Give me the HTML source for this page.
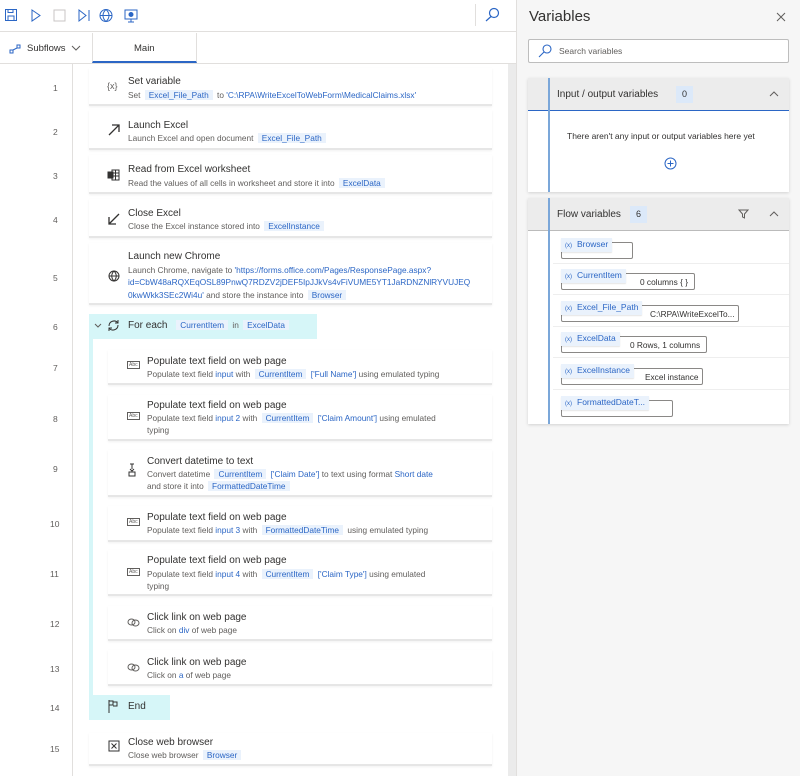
<!DOCTYPE html>
<html><head><meta charset="utf-8"><style>
*{box-sizing:border-box;margin:0;padding:0}
body{width:800px;height:776px;overflow:hidden;background:#fff;font-family:"Liberation Sans",sans-serif;position:relative;color:#323130}
.a{position:absolute}
.num{position:absolute;left:40px;width:30px;text-align:left;font-size:8.5px;color:#605e5c}
.card{position:absolute;left:89px;width:403px;background:#fff;border-bottom:2px solid #e6e6e6;box-shadow:0 1px 2px rgba(0,0,0,.06)}
.in{left:108px;width:384px}
.t{position:absolute;font-size:10px;color:#323130;white-space:nowrap}
.s{position:absolute;font-size:8.3px;color:#605e5c;white-space:nowrap;line-height:12.3px}
.l{color:#2b66c5}
.p{color:#2b66c5;background:#eaf2fc;padding:0 4px;margin:0 2px}
.ic{position:absolute;font-size:10px;color:#323130}
.vrow{position:absolute;left:553px;width:236px;height:31px;border-bottom:1px solid #eee}
.vp{position:absolute;left:8px;top:5px;height:14px;font-size:8.5px;color:#2b66c5;background:#eaf2fc;padding:1px 4px;white-space:nowrap;box-shadow:0 1px 1px rgba(0,0,0,.1)}
.vp b{font-weight:normal;font-size:6px;margin-right:5px;color:#2b66c5}
.vb{position:absolute;top:9px;height:17px;border:1px solid #8a8886;border-radius:2px;font-size:8.3px;color:#323130;padding:3px 3px 0;white-space:nowrap;background:#fff}
</style></head><body>
<!-- toolbar -->
<div class="a" style="left:0;top:0;width:516px;height:32px;border-bottom:1px solid #e1dfdd"></div>
<svg class="a" style="left:4px;top:8px" width="140" height="16" viewBox="0 0 140 16" fill="none" stroke="#2b66c5" stroke-width="1">
<rect x="1.5" y="1.5" width="11" height="11"/><rect x="4" y="8" width="6" height="4.5"/><rect x="4" y="1.5" width="5" height="3"/>
<path d="M28 2 L36 7.5 L28 13 Z"/>
<rect x="50" y="2" width="11" height="11" stroke="#c8c6c4"/>
<path d="M75 2 L82 7.5 L75 13 Z M85 2 V13"/>
<circle cx="102" cy="7.5" r="6"/><path d="M96 7.5 H108 M102 1.5 C98 5 98 10 102 13.5 C106 10 106 5 102 1.5"/>
<rect x="121" y="2" width="12" height="9"/><path d="M124 14 H130 M127 11 V14"/><circle cx="127" cy="6.5" r="2" fill="#2b66c5"/>
</svg>
<div class="a" style="left:475px;top:4px;width:1px;height:22px;background:#e1dfdd"></div>
<svg class="a" style="left:484px;top:7px" width="16" height="16" fill="none" stroke="#2b66c5" stroke-width="1.2"><circle cx="10" cy="6" r="4.5"/><path d="M7 9.5 L2 14"/></svg>
<!-- tabs -->
<div class="a" style="left:0;top:63px;width:516px;height:1px;background:#e1dfdd"></div>
<svg class="a" style="left:9px;top:44px" width="12" height="10" fill="none" stroke="#2b66c5"><rect x="1" y="6" width="3" height="3"/><rect x="8" y="1" width="3" height="3"/><path d="M4 6 L8 4"/></svg>
<div class="a" style="left:27px;top:43px;font-size:9.5px">Subflows</div>
<svg class="a" style="left:71px;top:45px" width="10" height="6" fill="none" stroke="#605e5c"><path d="M1 1 L5 5 L9 1"/></svg>
<div class="a" style="left:92px;top:33px;width:105px;height:30px;border-left:1px solid #e1dfdd;border-right:1px solid #e1dfdd;border-bottom:2px solid #2b66c5"></div>
<div class="a" style="left:134px;top:43px;font-size:9.5px">Main</div>
<!-- gutter -->
<div class="a" style="left:72px;top:64px;width:1px;height:712px;background:#e1dfdd"></div>
<div class="a" style="left:508px;top:64px;width:8px;height:712px;background:#ebebeb"></div>
<div class="num" style="top:83px;left:53px">1</div>
<div class="num" style="top:127px;left:53px">2</div>
<div class="num" style="top:171px;left:53px">3</div>
<div class="num" style="top:215px;left:53px">4</div>
<div class="num" style="top:273px;left:53px">5</div>
<div class="num" style="top:322px;left:53px">6</div>
<div class="num" style="top:363px;left:53px">7</div>
<div class="num" style="top:414px;left:53px">8</div>
<div class="num" style="top:464px;left:53px">9</div>
<div class="num" style="top:519px;left:50px">10</div>
<div class="num" style="top:569px;left:50px">11</div>
<div class="num" style="top:619px;left:50px">12</div>
<div class="num" style="top:664px;left:50px">13</div>
<div class="num" style="top:703px;left:50px">14</div>
<div class="num" style="top:744px;left:50px">15</div>

<!-- cards -->
<div class="card" style="top:68px;height:38px"></div>
<div class="ic" style="left:107px;top:81px;font-size:9px;color:#605e5c">{x}</div>
<div class="t" style="left:128px;top:76px">Set variable</div>
<div class="s" style="left:128px;top:89px">Set <span class="p">Excel_File_Path</span> to <span class="l">'C:\RPA\WriteExcelToWebForm\MedicalClaims.xlsx'</span></div>

<div class="card" style="top:110px;height:40px"></div>
<svg class="a" style="left:108px;top:124px" width="12" height="12" stroke="#323130" stroke-width="1.3" fill="none"><path d="M1 11 L11 1 M4 1 H11 V8"/></svg>
<div class="t" style="left:128px;top:120px">Launch Excel</div>
<div class="s" style="left:128px;top:132px">Launch Excel and open document <span class="p">Excel_File_Path</span></div>

<div class="card" style="top:155px;height:39px"></div>
<svg class="a" style="left:107px;top:169px" width="13" height="12" stroke="#323130" fill="none"><rect x="5" y="1" width="7" height="10"/><path d="M5 4 H12 M5 7 H12 M8.5 1 V11"/><rect x="1" y="3" width="5" height="6" fill="#323130"/></svg>
<div class="t" style="left:128px;top:164px">Read from Excel worksheet</div>
<div class="s" style="left:128px;top:177px">Read the values of all cells in worksheet and store it into <span class="p">ExcelData</span></div>

<div class="card" style="top:199px;height:39px"></div>
<svg class="a" style="left:108px;top:213px" width="12" height="12" stroke="#323130" stroke-width="1.3" fill="none"><path d="M11 1 L1 11 M1 4 V11 H8"/></svg>
<div class="t" style="left:128px;top:208px">Close Excel</div>
<div class="s" style="left:128px;top:220px">Close the Excel instance stored into <span class="p">ExcelInstance</span></div>

<div class="card" style="top:243px;height:62px"></div>
<svg class="a" style="left:108px;top:270px" width="12" height="12" stroke="#323130" fill="none"><circle cx="6" cy="6" r="5"/><path d="M1 6 H11 M6 1 C3 4 3 8 6 11 C9 8 9 4 6 1"/></svg>
<div class="t" style="left:128px;top:251px">Launch new Chrome</div>
<div class="s" style="left:128px;top:264px">Launch Chrome, navigate to <span class="l">'https://forms.office.com/Pages/ResponsePage.aspx?</span><br><span class="l">id=CbW48aRQXEqOSL89PnwQ7RDZV2jDEF5IpJJkVs4vFiVUME5YT1JaRDNZNlRYVUJEQ</span><br><span class="l">0kwWkk3SEc2Wi4u'</span> and store the instance into <span class="p">Browser</span></div>

<!-- for each -->
<div class="a" style="left:89px;top:314px;width:228px;height:25px;background:#d6f6f8"></div>
<div class="a" style="left:89px;top:339px;width:4px;height:356px;background:#d6f6f8"></div>
<svg class="a" style="left:94px;top:323px" width="8" height="6" fill="none" stroke="#605e5c"><path d="M1 1 L4 4 L7 1"/></svg>
<svg class="a" style="left:107px;top:319px" width="13" height="13" fill="none" stroke="#323130"><path d="M2 7 A5 5 0 0 1 11 4 M11 1 V4 H8 M11 6 A5 5 0 0 1 2 9 M2 12 V9 H5"/></svg>
<div class="t" style="left:128px;top:320px">For each <span class="p" style="font-size:8.3px;margin-left:6px">CurrentItem</span><span style="font-size:8.3px;color:#605e5c"> in </span><span class="p" style="font-size:8.3px">ExcelData</span></div>

<div class="card in" style="top:350px;height:35px"></div>
<div class="ic" style="left:127px;top:361px;font-size:5px;border:1px solid #605e5c;padding:0 1px;color:#605e5c">Abc</div>
<div class="t" style="left:147px;top:356px">Populate text field on web page</div>
<div class="s" style="left:147px;top:368px">Populate text field <span class="l">input</span> with <span class="p">CurrentItem</span> <span class="l">['Full Name']</span> using emulated typing</div>

<div class="card in" style="top:395px;height:46px"></div>
<div class="ic" style="left:127px;top:412px;font-size:5px;border:1px solid #605e5c;padding:0 1px;color:#605e5c">Abc</div>
<div class="t" style="left:147px;top:400px">Populate text field on web page</div>
<div class="s" style="left:147px;top:412px">Populate text field <span class="l">input 2</span> with <span class="p">CurrentItem</span> <span class="l">['Claim Amount']</span> using emulated<br>typing</div>

<div class="card in" style="top:450px;height:47px"></div>
<svg class="a" style="left:128px;top:463px" width="8" height="14" fill="none" stroke="#323130"><path d="M2 1 H6 M4 1 V6 M2 6 L4 8 L6 6"/><rect x="1" y="9" width="6" height="4"/></svg>
<div class="t" style="left:147px;top:456px">Convert datetime to text</div>
<div class="s" style="left:147px;top:468px">Convert datetime <span class="p">CurrentItem</span> <span class="l">['Claim Date']</span> to text using format <span class="l">Short date</span><br>and store it into <span class="p">FormattedDateTime</span></div>

<div class="card in" style="top:506px;height:36px"></div>
<div class="ic" style="left:127px;top:518px;font-size:5px;border:1px solid #605e5c;padding:0 1px;color:#605e5c">Abc</div>
<div class="t" style="left:147px;top:512px">Populate text field on web page</div>
<div class="s" style="left:147px;top:524px">Populate text field <span class="l">input 3</span> with <span class="p">FormattedDateTime</span> using emulated typing</div>

<div class="card in" style="top:550px;height:46px"></div>
<div class="ic" style="left:127px;top:568px;font-size:5px;border:1px solid #605e5c;padding:0 1px;color:#605e5c">Abc</div>
<div class="t" style="left:147px;top:555px">Populate text field on web page</div>
<div class="s" style="left:147px;top:568px">Populate text field <span class="l">input 4</span> with <span class="p">CurrentItem</span> <span class="l">['Claim Type']</span> using emulated<br>typing</div>

<div class="card in" style="top:606px;height:35px"></div>
<svg class="a" style="left:127px;top:618px" width="13" height="9" fill="none" stroke="#605e5c"><ellipse cx="4.5" cy="4" rx="3.5" ry="3"/><ellipse cx="8.5" cy="5" rx="3.5" ry="3"/></svg>
<div class="t" style="left:147px;top:612px">Click link on web page</div>
<div class="s" style="left:147px;top:624px">Click on <span class="l">div</span> of web page</div>

<div class="card in" style="top:650px;height:36px"></div>
<svg class="a" style="left:127px;top:663px" width="13" height="9" fill="none" stroke="#605e5c"><ellipse cx="4.5" cy="4" rx="3.5" ry="3"/><ellipse cx="8.5" cy="5" rx="3.5" ry="3"/></svg>
<div class="t" style="left:147px;top:657px">Click link on web page</div>
<div class="s" style="left:147px;top:669px">Click on <span class="l">a</span> of web page</div>

<div class="a" style="left:89px;top:695px;width:81px;height:25px;background:#d6f6f8"></div>
<svg class="a" style="left:108px;top:700px" width="10" height="13" fill="none" stroke="#323130"><path d="M1 0 V13 M1 1 H5 V5 H1 M5 2 H9 V6 H5"/></svg>
<div class="t" style="left:128px;top:701px">End</div>

<div class="card" style="top:733px;height:33px"></div>
<svg class="a" style="left:108px;top:740px" width="12" height="12" fill="none" stroke="#323130"><rect x="1" y="1" width="10" height="10"/><path d="M3.5 3.5 L8.5 8.5 M8.5 3.5 L3.5 8.5"/></svg>
<div class="t" style="left:128px;top:737px">Close web browser</div>
<div class="s" style="left:128px;top:749px">Close web browser <span class="p">Browser</span></div>

<!-- right panel -->
<div class="a" style="left:516px;top:0;width:284px;height:776px;background:#f6f6f6;border-left:1px solid #e1dfdd"></div>
<div class="a" style="left:529px;top:8px;font-size:15px;color:#323130">Variables</div>
<svg class="a" style="left:776px;top:12px" width="10" height="10" stroke="#605e5c"><path d="M1 1 L9 9 M9 1 L1 9"/></svg>
<div class="a" style="left:528px;top:39px;width:261px;height:24px;background:#fff;border:1px solid #bdbdbd;border-radius:2px"></div>
<svg class="a" style="left:538px;top:44px" width="14" height="14" fill="none" stroke="#2b66c5" stroke-width="1.1"><circle cx="9" cy="5" r="4"/><path d="M6 8 L1 13"/></svg>
<div class="a" style="left:559px;top:46px;font-size:8.5px;color:#605e5c">Search variables</div>

<div class="a" style="left:528px;top:78px;width:261px;height:114px;background:#fff;box-shadow:0 1px 3px rgba(0,0,0,.15)"></div>
<div class="a" style="left:528px;top:78px;width:261px;height:33px;background:#ececec;border-bottom:1px solid #2b66c5"></div>
<div class="a" style="left:548px;top:78px;width:2px;height:114px;background:#7ba7d9"></div>
<div class="a" style="left:557px;top:89px;font-size:10px">Input / output variables</div>
<div class="a" style="left:676px;top:86px;width:17px;height:17px;background:#dce9f9;font-size:9px;text-align:center;line-height:17px">0</div>
<svg class="a" style="left:769px;top:91px" width="10" height="6" fill="none" stroke="#605e5c"><path d="M1 5 L5 1 L9 5"/></svg>
<div class="a" style="left:567px;top:131px;font-size:8.5px;color:#323130">There aren't any input or output variables here yet</div>
<svg class="a" style="left:664px;top:157px" width="13" height="13" fill="none" stroke="#2b66c5"><circle cx="6.5" cy="6.5" r="5.5"/><path d="M6.5 3.5 V9.5 M3.5 6.5 H9.5"/></svg>

<div class="a" style="left:528px;top:198px;width:261px;height:226px;background:#fff;box-shadow:0 1px 3px rgba(0,0,0,.15)"></div>
<div class="a" style="left:528px;top:198px;width:261px;height:33px;background:#ececec;border-bottom:1px solid #bbb"></div>
<div class="a" style="left:548px;top:198px;width:2px;height:226px;background:#7ba7d9"></div>
<div class="a" style="left:557px;top:209px;font-size:10px">Flow variables</div>
<div class="a" style="left:630px;top:206px;width:17px;height:17px;background:#dce9f9;font-size:9px;text-align:center;line-height:17px">6</div>
<svg class="a" style="left:738px;top:209px" width="11" height="10" fill="none" stroke="#605e5c"><path d="M1 1 H10 L6.5 5 V9 L4.5 8 V5 Z"/></svg>
<svg class="a" style="left:769px;top:211px" width="10" height="6" fill="none" stroke="#605e5c"><path d="M1 5 L5 1 L9 5"/></svg>

<div class="vrow" style="top:233px"><div class="vb" style="left:8px;width:72px"></div><div class="vp"><b>(x)</b>Browser</div></div>
<div class="vrow" style="top:264px"><div class="vb" style="left:8px;width:134px;padding-left:78px">0 columns { }</div><div class="vp"><b>(x)</b>CurrentItem</div></div>
<div class="vrow" style="top:296px"><div class="vb" style="left:8px;width:178px;padding-left:88px">C:\RPA\WriteExcelTo...</div><div class="vp"><b>(x)</b>Excel_File_Path</div></div>
<div class="vrow" style="top:327px"><div class="vb" style="left:8px;width:146px;padding-left:68px">0 Rows, 1 columns</div><div class="vp"><b>(x)</b>ExcelData</div></div>
<div class="vrow" style="top:359px"><div class="vb" style="left:8px;width:142px;padding-left:83px">Excel instance</div><div class="vp"><b>(x)</b>ExcelInstance</div></div>
<div class="vrow" style="top:391px;border-bottom:none"><div class="vb" style="left:8px;width:112px"></div><div class="vp"><b>(x)</b>FormattedDateT...</div></div>
</body></html>
